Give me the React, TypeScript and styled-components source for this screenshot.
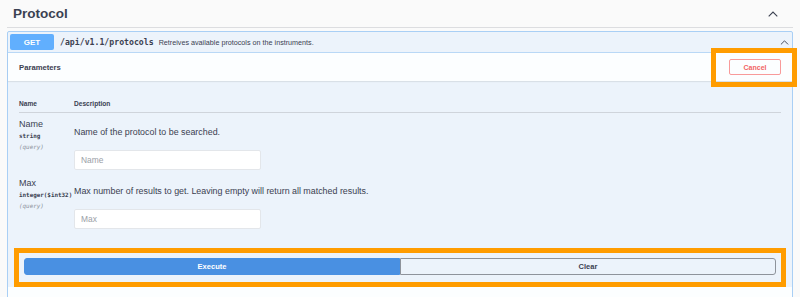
import styled, { createGlobalStyle, css } from "styled-components";

const GlobalStyle = createGlobalStyle`
  body {
    margin: 0;
    background: #fafafa;
    font-family: "Liberation Sans", Arial, sans-serif;
    color: #3b4151;
  }
`;

const highlight = css`
  position: relative;

  &::after {
    content: "";
    position: absolute;
    border: 5px solid #ff9c00;
    pointer-events: none;
  }
`;

const Page = styled.div`
  padding: 0 7px;
`;

const TagHeading = styled.div`
  display: flex;
  justify-content: space-between;
  align-items: center;
  height: 27px;
  padding: 0 15px 0 6px;
  border-bottom: 1px solid #dcdde0;
  margin-bottom: 3px;
`;

const TagTitle = styled.h3`
  margin: 0;
  font-size: 13.5px;
  font-weight: bold;
  color: #3b4151;
`;

const Opblock = styled.div`
  border: 1px solid #a9cff5;
  border-radius: 2px;
  background: #ecf3fb;
`;

const Summary = styled.div`
  display: flex;
  align-items: center;
  height: 20px;
  padding: 0 3px 0 2px;
  border-bottom: 1px solid #b9d8f6;
`;

const Method = styled.span`
  display: flex;
  align-items: center;
  justify-content: center;
  width: 44px;
  height: 16px;
  border-radius: 2px;
  background: #61affe;
  color: #fff;
  font-size: 8px;
  font-weight: bold;
`;

const Path = styled.span`
  margin-left: 6px;
  font-family: "DejaVu Sans Mono", "Liberation Mono", monospace;
  font-size: 8.2px;
  font-weight: bold;
`;

const SummaryDesc = styled.span`
  margin-left: 5px;
  flex: 1;
  font-size: 7.2px;
`;

const SectionHeader = styled.div`
  display: flex;
  justify-content: space-between;
  align-items: center;
  height: 28px;
  padding: 0 11px;
  background: rgba(255, 255, 255, 0.85);
  box-shadow: 0 1px 1px rgba(0, 0, 0, 0.08);
`;

const SectionTitle = styled.h4`
  margin: 0;
  font-size: 7.7px;
  font-weight: bold;
`;

const CancelWrap = styled.div`
  ${highlight}
  display: flex;

  &::after {
    inset: -11px -16px -12px -18px;
  }
`;

const CancelButton = styled.button`
  width: 52px;
  height: 16px;
  padding: 0;
  border: 1px solid #f89a9a;
  border-radius: 2px;
  background: transparent;
  color: #f26464;
  font-family: inherit;
  font-size: 7px;
  font-weight: bold;
`;

const Params = styled.div`
  padding: 17px 11px 18px;
`;

const HeaderRow = styled.div`
  display: grid;
  grid-template-columns: 55px 1fr;
  height: 12px;
  line-height: 12px;
  padding-bottom: 2px;
  border-bottom: 1px solid #cfd4db;
  font-size: 6.6px;
  font-weight: bold;
`;

const ParamRow = styled.div`
  display: grid;
  grid-template-columns: 55px 1fr;
  padding-top: 6px;

  & + & {
    padding-top: 8px;
  }
`;

const ParamName = styled.div`
  font-size: 9px;
  line-height: 11px;
`;

const ParamType = styled.div`
  font-family: "DejaVu Sans Mono", "Liberation Mono", monospace;
  font-size: 5.9px;
  font-weight: bold;
  line-height: 12px;
  white-space: nowrap;
`;

const ParamIn = styled.div`
  font-family: "DejaVu Sans Mono", "Liberation Mono", monospace;
  font-size: 5.9px;
  font-style: italic;
  color: #8a8f99;
  line-height: 10px;
`;

const ParamDesc = styled.div`
  padding-top: 8px;
`;

const DescText = styled.p`
  margin: 0 0 13px;
  font-size: 8.9px;
  line-height: 10px;
`;

const TextInput = styled.input`
  display: block;
  box-sizing: border-box;
  width: 187px;
  height: 20px;
  padding: 0 6px;
  border: 1px solid #e3e6ea;
  border-radius: 2px;
  background: #fff;
  font-family: inherit;
  font-size: 8.4px;
  color: #3b4151;

  &::placeholder {
    color: #9a9ea6;
  }
`;

const ExecuteWrapper = styled.div`
  ${highlight}
  display: flex;
  padding: 11px 16px;

  &::after {
    inset: 1px 6px -1px 6px;
  }
`;

const GroupButton = styled.button<{ $primary?: boolean }>`
  flex: 1;
  height: 17px;
  padding: 0;
  font-family: inherit;
  font-size: 7.5px;
  font-weight: bold;
  border: 1px solid ${(p) => (p.$primary ? "#4990e2" : "#8e939b")};
  border-radius: ${(p) => (p.$primary ? "3px 0 0 3px" : "0 3px 3px 0")};
  background: ${(p) => (p.$primary ? "#4990e2" : "transparent")};
  color: ${(p) => (p.$primary ? "#fff" : "#3b4151")};
`;

const Responses = styled.div`
  height: 20px;
  margin-top: 1px;
  background: rgba(255, 255, 255, 0.85);
`;

function Chevron({ w, h }: { w: number; h: number }) {
  return (
    <svg width={w} height={h} viewBox="0 0 10 6" fill="none">
      <polyline
        points="0.7,5.3 5,1 9.3,5.3"
        stroke="#3b4151"
        strokeWidth="1.1"
      />
    </svg>
  );
}

const params = [
  {
    name: "Name",
    type: "string",
    desc: "Name of the protocol to be searched.",
  },
  {
    name: "Max",
    type: "integer($int32)",
    desc: "Max number of results to get. Leaving empty will return all matched results.",
  },
];

export default function App() {
  return (
    <Page>
      <GlobalStyle />
      <TagHeading>
        <TagTitle>Protocol</TagTitle>
        <Chevron w={10} h={6} />
      </TagHeading>
      <Opblock>
        <Summary>
          <Method>GET</Method>
          <Path>/api/v1.1/protocols</Path>
          <SummaryDesc>Retreives available protocols on the instruments.</SummaryDesc>
          <Chevron w={9} h={5} />
        </Summary>
        <SectionHeader>
          <SectionTitle>Parameters</SectionTitle>
          <CancelWrap>
            <CancelButton>Cancel</CancelButton>
          </CancelWrap>
        </SectionHeader>
        <Params>
          <HeaderRow>
            <span>Name</span>
            <span>Description</span>
          </HeaderRow>
          {params.map((p) => (
            <ParamRow key={p.name}>
              <div>
                <ParamName>{p.name}</ParamName>
                <ParamType>{p.type}</ParamType>
                <ParamIn>(query)</ParamIn>
              </div>
              <ParamDesc>
                <DescText>{p.desc}</DescText>
                <TextInput placeholder={p.name} />
              </ParamDesc>
            </ParamRow>
          ))}
        </Params>
        <ExecuteWrapper>
          <GroupButton $primary>Execute</GroupButton>
          <GroupButton>Clear</GroupButton>
        </ExecuteWrapper>
        <Responses />
      </Opblock>
    </Page>
  );
}
